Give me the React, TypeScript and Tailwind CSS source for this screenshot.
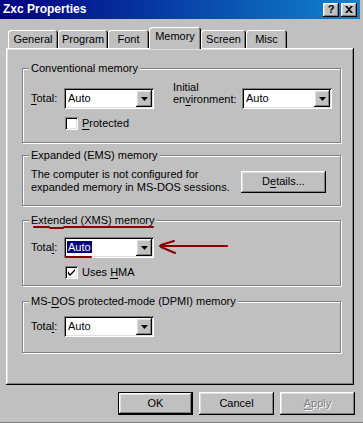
import React from 'react';

const raised =
  'shadow-[inset_-1px_-1px_#000,inset_1px_1px_#fff,inset_-2px_-2px_#808080,inset_2px_2px_#dfdfdf]';
const sunken =
  'shadow-[inset_1px_1px_#808080,inset_-1px_-1px_#fff,inset_2px_2px_#000,inset_-2px_-2px_#dfdfdf]';
const etched = 'border border-[#808080] shadow-[inset_1px_1px_#fff,1px_1px_#fff]';

function U({ children }: { children: React.ReactNode }) {
  return <span className="underline underline-offset-[2px]">{children}</span>;
}

function Combo({ selected = false }: { selected?: boolean }) {
  return (
    <div className={`flex h-[21px] w-[90px] items-center bg-white p-[2px] ${sunken}`}>
      <span className="flex-1 pl-[1px]">
        <span className={selected ? 'bg-[#000080] px-[1px] text-white' : 'px-[1px]'}>Auto</span>
      </span>
      <span className={`flex h-[17px] w-[16px] items-center justify-center bg-[#c0c0c0] ${raised}`}>
        <svg width="7" height="4" viewBox="0 0 7 4">
          <path d="M0 0h7L3.5 4z" fill="#000" />
        </svg>
      </span>
    </div>
  );
}

function Check({ checked = false }: { checked?: boolean }) {
  return (
    <span className={`flex h-[13px] w-[13px] items-center justify-center bg-white ${sunken}`}>
      {checked && (
        <svg width="7" height="7" viewBox="0 0 7 7">
          <path d="M0 2v3l2 2 5-5V-0L2 5z" fill="#000" />
        </svg>
      )}
    </span>
  );
}

function Group({
  title,
  className,
  children,
}: {
  title: React.ReactNode;
  className: string;
  children: React.ReactNode;
}) {
  return (
    <div className={`relative w-[319px] pl-[8px] ${etched} ${className}`}>
      <span className="absolute -top-[7px] left-[6px] bg-[#c0c0c0] px-[2px] leading-[13px]">
        {title}
      </span>
      {children}
    </div>
  );
}

const tabs = [
  { label: 'General', w: 'w-[50px]' },
  { label: 'Program', w: 'w-[50px]' },
  { label: 'Font', w: 'w-[41px]' },
  { label: 'Memory', w: 'w-[52px]', active: true },
  { label: 'Screen', w: 'w-[45px]' },
  { label: 'Misc', w: 'w-[41px]' },
];

export default function App() {
  return (
    <div className="relative flex h-[423px] w-[363px] flex-col border-b border-[#808080] bg-[#c0c0c0] font-['Liberation_Sans',Arial,sans-serif] text-[11px] leading-[13px] text-black">
      <div className="flex h-[19px] w-[360px] items-center bg-[linear-gradient(90deg,#000080,#1084d0)] pl-[3px] pr-[3px]">
        <span className="flex-1 text-[12px] font-bold text-white">Zxc Properties</span>
        <span className={`flex h-[14px] w-[16px] items-center justify-center bg-[#c0c0c0] text-[11px] font-bold ${raised}`}>
          ?
        </span>
        <span className={`ml-[2px] flex h-[14px] w-[16px] items-center justify-center bg-[#c0c0c0] ${raised}`}>
          <svg width="8" height="7" viewBox="0 0 8 7">
            <path d="M0 0h2l2 2 2-2h2L5 3.5 8 7H6L4 5 2 7H0l3-3.5z" fill="#000" />
          </svg>
        </span>
      </div>

      <div className="mt-[8px] flex h-[21px] items-end pl-[8px]">
        {tabs.map((t) => (
          <div
            key={t.label}
            className={`flex items-center justify-center rounded-t-[3px] bg-[#c0c0c0] shadow-[inset_1px_1px_#fff,inset_-1px_0_#000,inset_-2px_0_#808080] ${t.w} ${
              t.active ? 'relative z-10 -mb-[1px] h-[22px] pb-[4px]' : 'h-[18px] pt-[1px]'
            }`}
          >
            {t.label}
          </div>
        ))}
      </div>

      <div className={`ml-[6px] flex h-[337px] w-[348px] flex-col px-[16px] pt-[20px] ${raised}`}>
        <Group title="Conventional memory" className="h-[75px] pt-[19px]">
          <div className="flex h-[21px] items-center">
            <span className="w-[33px]">
              <U>T</U>otal:
            </span>
            <Combo />
            <span className="-mt-[12px] ml-[19px] w-[69px] leading-[12px]">
              Initial
              <br />
              en<U>v</U>ironment:
            </span>
            <Combo />
          </div>
          <div className="mt-[8px] flex items-center pl-[34px]">
            <Check />
            <span className="ml-[4px]">
              <U>P</U>rotected
            </span>
          </div>
        </Group>

        <Group title="Expanded (EMS) memory" className="mt-[12px] flex h-[51px] items-center pr-[14px]">
          <span className="leading-[13px]">
            The computer is not configured for
            <br />
            expanded memory in MS-DOS sessions.
          </span>
          <span className={`ml-auto mt-[2px] flex h-[22px] w-[85px] items-center justify-center ${raised}`}>
            D<U>e</U>tails...
          </span>
        </Group>

        <Group title="Extended (XMS) memory" className="mt-[14px] h-[66px] pt-[16px]">
          <div className="flex items-center">
            <span className="w-[33px]">
              Tota<U>l</U>:
            </span>
            <Combo selected />
          </div>
          <div className="mt-[8px] flex items-center pl-[34px]">
            <Check checked />
            <span className="ml-[4px]">
              Uses <U>H</U>MA
            </span>
          </div>
        </Group>

        <Group
          title={
            <>
              MS-<U>D</U>OS protected-mode (DPMI) memory
            </>
          }
          className="mt-[15px] h-[52px] pt-[14px]"
        >
          <div className="flex items-center">
            <span className="w-[33px]">
              Tota<U>l</U>:
            </span>
            <Combo />
          </div>
        </Group>
      </div>

      <div className="mt-[7px] flex justify-end gap-[6px] pr-[8px]">
        <span className={`flex h-[23px] w-[75px] items-center justify-center border border-black ${raised}`}>OK</span>
        <span className={`flex h-[23px] w-[75px] items-center justify-center ${raised}`}>Cancel</span>
        <span className={`flex h-[23px] w-[75px] items-center justify-center text-[#808080] [text-shadow:1px_1px_0_#fff] ${raised}`}>
          <U>A</U>pply
        </span>
      </div>

      <svg
        className="pointer-events-none absolute left-0 top-0"
        width="363"
        height="423"
        viewBox="0 0 363 423"
      >
        <g stroke="#8b0000" strokeWidth="2" fill="none" strokeLinecap="round">
          <path d="M34 227h15M50 228h13M64 227h89" />
          <path d="M66 257h25" />
          <path d="M160 246h67" />
          <path d="M161 245l13-4M161 247l14 6" />
        </g>
      </svg>
    </div>
  );
}
